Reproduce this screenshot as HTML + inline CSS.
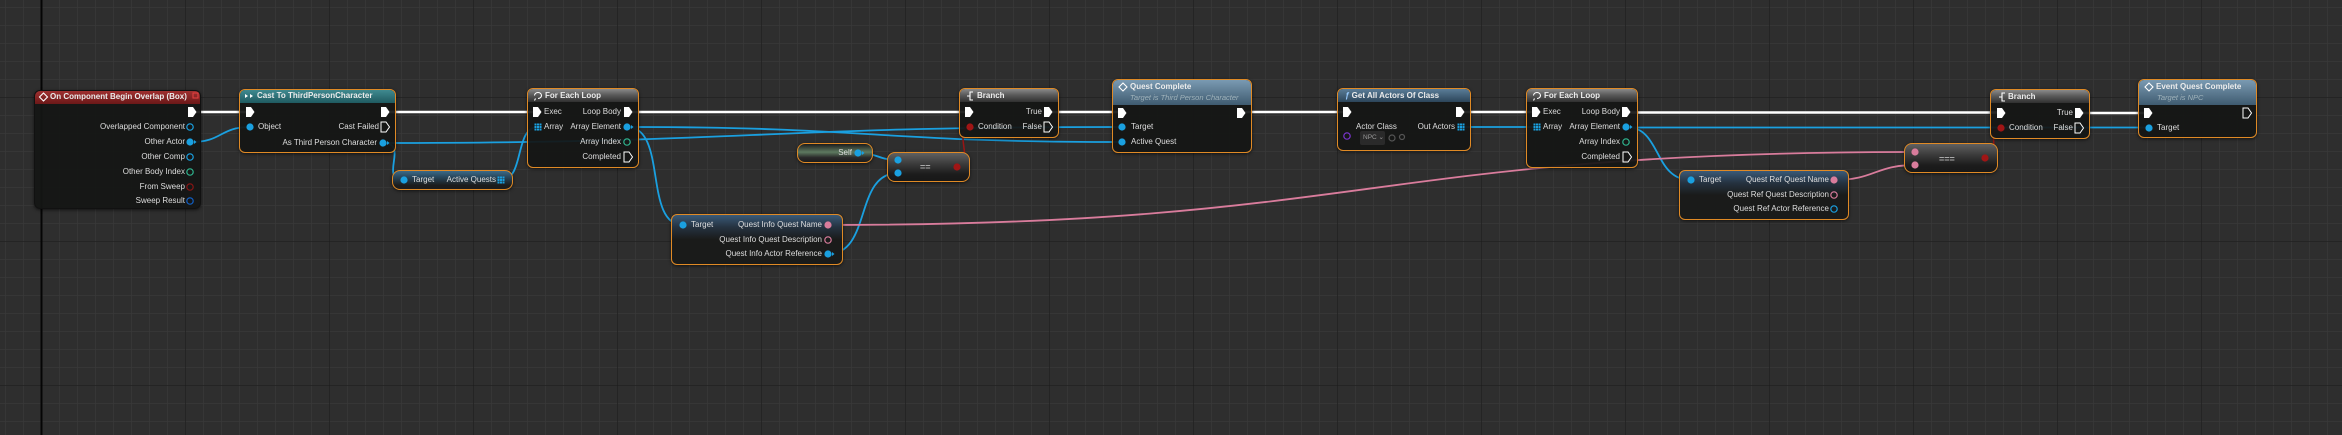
<!DOCTYPE html>
<html><head><meta charset="utf-8">
<style>
html,body{margin:0;padding:0;}
body{width:2342px;height:435px;overflow:hidden;position:relative;background:#2e2e2e;font-family:"Liberation Sans",sans-serif;}
svg{position:absolute;left:0;top:0;}
.n{position:absolute;box-sizing:border-box;border:1.5px solid #e08a25;border-radius:6px;background:rgba(20,21,20,0.93);box-shadow:0 1px 3px rgba(0,0,0,0.6);overflow:hidden;}
.h{position:absolute;left:0;right:0;top:0;height:13px;}
.g{background:linear-gradient(180deg,#8a8a8a 0%,#5b5b5b 45%,#303030 100%);}
.t{position:absolute;font-size:8px;line-height:10px;margin-top:-5px;color:#dedede;white-space:nowrap;}
.hd{font-weight:bold;color:#ececec;font-size:8px;}
.sub{font-style:italic;color:#9fb2ba;font-size:7.5px;}
.pill{background:linear-gradient(180deg,#606060 0%,#3a3a3a 40%,#1c1c1c 75%,#181818 100%);border-radius:8px;}
</style></head><body>
<svg width="2342" height="435">
<defs>
<pattern id="mn" x="5" y="7" width="18" height="18" patternUnits="userSpaceOnUse">
<path d="M0 0V18M0 0H18" stroke="#3a3a3a" stroke-width="1.2" fill="none"/>
</pattern>
<pattern id="mj" x="41" y="97" width="144" height="144" patternUnits="userSpaceOnUse">
<path d="M0 0V144M0 0H144" stroke="#1c1c1c" stroke-width="1.3" fill="none"/>
</pattern>
</defs>
<rect width="2342" height="435" fill="url(#mn)"/>
<rect width="2342" height="435" fill="url(#mj)"/>
<rect x="40.5" y="0" width="2" height="435" fill="#050505"/>
</svg>

<svg width="2342" height="435">
<g fill="none" stroke-linecap="round">
<g stroke="#ffffff" stroke-width="2.6">
<path d="M196 112H246"/><path d="M389 112H533"/><path d="M632 112H965"/><path d="M1052 112H1118"/>
<path d="M1245 112H1343"/><path d="M1464 112H1532"/><path d="M1630 112.5H1997"/><path d="M2083 113H2144"/>
</g>
<g stroke="#1aa0e0" stroke-width="1.8">
<path d="M192 142C222 142,220 127,250 127"/>
<path d="M383 143C410 143,378 180,404 180"/>
<path d="M383 143C753 143,752 127,1122 127"/>
<path d="M501 180C525 180,514 127,538 127"/>
<path d="M627 127C875 127,875 142,1122 142"/>
<path d="M627 127C668 127,643 225,683 225"/>
<path d="M828 254C872 254,854 173,898 173"/>
<path d="M858 153C878 153,878 160,898 160"/>
<path d="M1461 127H1537"/>
<path d="M1626 127.5H2149"/>
<path d="M1626 127C1662 127,1653 180,1691 180"/>
</g>
<g stroke="#d97c9c" stroke-width="1.8">
<path d="M828 225C1370 225,1370 152,1915 152"/>
<path d="M1834 180C1875 180,1875 165,1915 165"/>
</g>
<g stroke="#9a1515" stroke-width="1.5">
<path d="M957 167C976 167,952 127,970 127"/>
<path d="M1985 158C2004 158,1984 128,2001 128"/>
</g>
</g>
</svg>

<div class="n" style="left:34px;top:90px;width:167px;height:119px;border-color:#111;border-width:1px">
<div class="h" style="background:linear-gradient(180deg,#a03030,#6b1818);"></div></div>
<div class="n" style="left:239px;top:89px;width:157px;height:64px"><div class="h" style="background:linear-gradient(180deg,#3f8a90,#1f5a60);"></div></div>
<div class="n pill" style="left:392px;top:170px;width:121px;height:20px;background:linear-gradient(180deg,#3c6a88 0%,#28465a 35%,#1c1c1c 80%)"></div>
<div class="n" style="left:527px;top:88px;width:112px;height:80px"><div class="h g"></div></div>
<div class="n pill" style="left:797px;top:143px;width:76px;height:20px;background:linear-gradient(180deg,#1c1c1c 0%,#5e7a60 45%,#2a2a2a 75%,#1c1c1c)"></div>
<div class="n pill" style="left:887px;top:152px;width:83px;height:30px"></div>
<div class="n" style="left:671px;top:214px;width:172px;height:51px;background:linear-gradient(180deg,#3a5a78 0%,#253240 25%,#1a1b1a 50%)"></div>
<div class="n" style="left:959px;top:88px;width:100px;height:50px"><div class="h g"></div></div>
<div class="n" style="left:1112px;top:79px;width:140px;height:74px"><div class="h" style="height:25px;background:linear-gradient(180deg,#7a9ab2,#3f5b70);"></div></div>
<div class="n" style="left:1337px;top:88px;width:134px;height:63px"><div class="h" style="background:linear-gradient(180deg,#5a7d98,#2c455a);"></div></div>
<div class="n" style="left:1526px;top:88px;width:112px;height:80px"><div class="h g"></div></div>
<div class="n" style="left:1679px;top:170px;width:170px;height:50px;background:linear-gradient(180deg,#3a5a78 0%,#253240 25%,#1a1b1a 50%)"></div>
<div class="n pill" style="left:1904px;top:143px;width:94px;height:30px"></div>
<div class="n" style="left:1990px;top:89px;width:100px;height:50px"><div class="h g"></div></div>
<div class="n" style="left:2138px;top:79px;width:119px;height:59px"><div class="h" style="height:25px;background:linear-gradient(180deg,#7a9ab2,#3f5b70);"></div></div>

<div style="position:absolute;left:1360px;top:131px;width:25px;height:14px;background:#2a2a2a;border-radius:2px"></div>

<svg width="2342" height="435">
<defs>
<polygon id="ex" points="-4,-5 1,-5 4.5,0 1,5 -4,5"/>
<g id="arr"><rect x="-3.5" y="-3.5" width="2" height="2"/><rect x="-1" y="-3.5" width="2" height="2"/><rect x="1.5" y="-3.5" width="2" height="2"/><rect x="-3.5" y="-1" width="2" height="2"/><rect x="-1" y="-1" width="2" height="2"/><rect x="1.5" y="-1" width="2" height="2"/><rect x="-3.5" y="1.5" width="2" height="2"/><rect x="-1" y="1.5" width="2" height="2"/><rect x="1.5" y="1.5" width="2" height="2"/></g>
</defs>
<g fill="#fff">
<use href="#ex" x="192" y="112"/><use href="#ex" x="250" y="112"/><use href="#ex" x="385" y="112"/>
<use href="#ex" x="537" y="112"/><use href="#ex" x="628" y="112"/>
<use href="#ex" x="969" y="112"/><use href="#ex" x="1048" y="112"/>
<use href="#ex" x="1122" y="113"/><use href="#ex" x="1241" y="113"/>
<use href="#ex" x="1347" y="112"/><use href="#ex" x="1460" y="112"/>
<use href="#ex" x="1536" y="112"/><use href="#ex" x="1626" y="112"/>
<use href="#ex" x="2001" y="113"/><use href="#ex" x="2079" y="113"/>
<use href="#ex" x="2148" y="113"/>
</g>
<g fill="none" stroke="#fff" stroke-width="1">
<use href="#ex" x="385" y="127"/><use href="#ex" x="628" y="157"/><use href="#ex" x="1048" y="127"/>
<use href="#ex" x="1627" y="157"/><use href="#ex" x="2079" y="128"/><use href="#ex" x="2247" y="113"/>
</g>
<g fill="#1aa0e0">
<circle cx="190" cy="142" r="3.6"/><path d="M194 140l2.5 2-2.5 2z"/>
<circle cx="250" cy="127" r="3.6"/>
<circle cx="383" cy="143" r="3.6"/><path d="M387 141l2.5 2-2.5 2z"/>
<circle cx="404" cy="180" r="3.6"/>
<circle cx="627" cy="127" r="3.6"/><path d="M631 125l2.5 2-2.5 2z"/>
<circle cx="858" cy="153" r="3.6"/><path d="M862 151l2.5 2-2.5 2z"/>
<circle cx="898" cy="160" r="3.6"/><circle cx="898" cy="173" r="3.6"/>
<circle cx="683" cy="225" r="3.6"/>
<circle cx="828" cy="254" r="3.6"/><path d="M832 252l2.5 2-2.5 2z"/>
<circle cx="1122" cy="127" r="3.6"/><circle cx="1122" cy="142" r="3.6"/>
<circle cx="1626" cy="127" r="3.6"/><path d="M1630 125l2.5 2-2.5 2z"/>
<circle cx="1691" cy="180" r="3.6"/>
<circle cx="2149" cy="128" r="3.6"/>
<use href="#arr" x="501" y="180"/><use href="#arr" x="538" y="127"/>
<use href="#arr" x="1461" y="127"/><use href="#arr" x="1537" y="127"/>
</g>
<g fill="none" stroke-width="1.2">
<g stroke="#1aa0e0">
<circle cx="190" cy="127" r="3.2"/><circle cx="190" cy="157" r="3.2"/>
<circle cx="1834" cy="209" r="3.2"/>
</g>
<circle cx="190" cy="201" r="3.2" stroke="#1060c8"/>
<circle cx="190" cy="172" r="3.2" stroke="#2fb58f"/>
<circle cx="190" cy="187" r="3.2" stroke="#8a1515"/>
<circle cx="627" cy="142" r="3.2" stroke="#2fb58f"/>
<circle cx="1626" cy="142" r="3.2" stroke="#2fb58f"/>
<circle cx="828" cy="240" r="3.2" stroke="#d97c9c"/>
<circle cx="1834" cy="195" r="3.2" stroke="#d97c9c"/>
<circle cx="1347" cy="136" r="3.2" stroke="#7a35d0"/>
<circle cx="1392" cy="138" r="3" stroke="#555"/>
<circle cx="1402" cy="137" r="2.5" stroke="#555"/>
</g>
<g fill="#d97c9c">
<circle cx="828" cy="225" r="3.6"/><circle cx="1834" cy="180" r="3.6"/>
<circle cx="1915" cy="152" r="3.6"/><circle cx="1915" cy="165" r="3.6"/>
</g>
<g fill="#a01515">
<circle cx="970" cy="127" r="3.6"/><circle cx="957" cy="167" r="3.6"/>
<circle cx="2001" cy="128" r="3.6"/><circle cx="1985" cy="158" r="3.6"/>
</g>
<g fill="none" stroke-width="1.1">
<rect x="193" y="93" width="5" height="5" stroke="#e04040"/>
<path d="M43.5 93l4 4-4 4-4-4z" stroke="#fff"/>
<path d="M1123 83l4 4-4 4-4-4z" stroke="#fff"/>
<path d="M2149 83l4 4-4 4-4-4z" stroke="#fff"/>
<path d="M534.5 95.5a3.5 3 0 1 1 3.5 3M535.5 98.5l-1 2" stroke="#fff"/>
<path d="M1533.5 95.5a3.5 3 0 1 1 3.5 3M1534.5 98.5l-1 2" stroke="#fff"/>
<path d="M973 92h-3v8h3M970 96h-3" stroke="#fff"/>
<path d="M2005 93h-3v8h3M2002 97h-3" stroke="#fff"/>
</g>
<path d="M245 94l3 2-3 2zM250 94l3 2-3 2z" fill="#fff"/>
</svg>

<div class="t hd" style="left:50px;top:97px">On Component Begin Overlap (Box)</div>
<div class="t" style="right:2157px;top:127px">Overlapped Component</div>
<div class="t" style="right:2157px;top:142px">Other Actor</div>
<div class="t" style="right:2157px;top:157px">Other Comp</div>
<div class="t" style="right:2157px;top:172px">Other Body Index</div>
<div class="t" style="right:2157px;top:187px">From Sweep</div>
<div class="t" style="right:2157px;top:201px">Sweep Result</div>

<div class="t hd" style="left:257px;top:96px">Cast To ThirdPersonCharacter</div>
<div class="t" style="left:258px;top:127px">Object</div>
<div class="t" style="right:1963px;top:127px">Cast Failed</div>
<div class="t" style="right:1965px;top:143px">As Third Person Character</div>

<div class="t" style="left:412px;top:180px">Target</div>
<div class="t" style="right:1846px;top:180px">Active Quests</div>

<div class="t hd" style="left:545px;top:96px">For Each Loop</div>
<div class="t" style="left:544px;top:112px">Exec</div>
<div class="t" style="left:544px;top:127px">Array</div>
<div class="t" style="right:1721px;top:112px">Loop Body</div>
<div class="t" style="right:1721px;top:127px">Array Element</div>
<div class="t" style="right:1721px;top:142px">Array Index</div>
<div class="t" style="right:1721px;top:157px">Completed</div>

<div class="t" style="right:1490px;top:153px">Self</div>
<div class="t" style="left:920px;top:167px;color:#aaa;font-weight:bold;font-size:9px">==</div>

<div class="t" style="left:691px;top:225px">Target</div>
<div class="t" style="right:1520px;top:225px">Quest Info Quest Name</div>
<div class="t" style="right:1520px;top:240px">Quest Info Quest Description</div>
<div class="t" style="right:1520px;top:254px">Quest Info Actor Reference</div>

<div class="t hd" style="left:977px;top:96px">Branch</div>
<div class="t" style="left:978px;top:127px">Condition</div>
<div class="t" style="right:1300px;top:112px">True</div>
<div class="t" style="right:1300px;top:127px">False</div>

<div class="t hd" style="left:1130px;top:87px">Quest Complete</div>
<div class="t sub" style="left:1130px;top:98px">Target is Third Person Character</div>
<div class="t" style="left:1131px;top:127px">Target</div>
<div class="t" style="left:1131px;top:142px">Active Quest</div>

<div class="t hd" style="left:1345px;top:96px"><span style="font-style:italic;color:#9cf">ƒ</span> Get All Actors Of Class</div>
<div class="t" style="left:1356px;top:127px">Actor Class</div>
<div class="t" style="left:1363px;top:138px;font-size:6.5px;color:#999">NPC ⌄</div>
<div class="t" style="right:887px;top:127px">Out Actors</div>

<div class="t hd" style="left:1544px;top:96px">For Each Loop</div>
<div class="t" style="left:1543px;top:112px">Exec</div>
<div class="t" style="left:1543px;top:127px">Array</div>
<div class="t" style="right:722px;top:112px">Loop Body</div>
<div class="t" style="right:722px;top:127px">Array Element</div>
<div class="t" style="right:722px;top:142px">Array Index</div>
<div class="t" style="right:722px;top:157px">Completed</div>

<div class="t" style="left:1699px;top:180px">Target</div>
<div class="t" style="right:513px;top:180px">Quest Ref Quest Name</div>
<div class="t" style="right:513px;top:195px">Quest Ref Quest Description</div>
<div class="t" style="right:513px;top:209px">Quest Ref Actor Reference</div>

<div class="t" style="left:1939px;top:159px;color:#aaa;font-weight:bold;font-size:9px">===</div>

<div class="t hd" style="left:2008px;top:97px">Branch</div>
<div class="t" style="left:2009px;top:128px">Condition</div>
<div class="t" style="right:269px;top:113px">True</div>
<div class="t" style="right:269px;top:128px">False</div>

<div class="t hd" style="left:2156px;top:87px">Event Quest Complete</div>
<div class="t sub" style="left:2157px;top:98px">Target is NPC</div>
<div class="t" style="left:2157px;top:128px">Target</div>
</body></html>
